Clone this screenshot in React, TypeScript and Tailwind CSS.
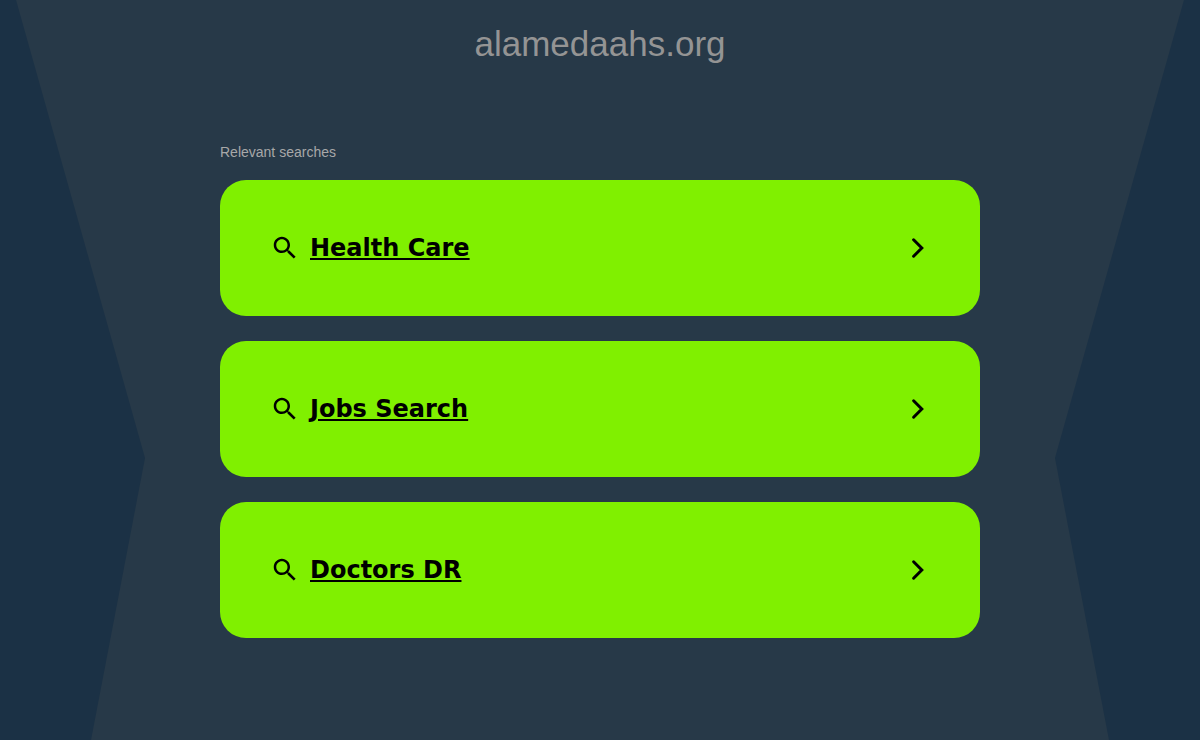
const searches = ['Health Care', 'Jobs Search', 'Doctors DR'];

function SearchIcon() {
  return (
    <svg viewBox="0 0 24 24" className="size-[30px] shrink-0" fill="currentColor" aria-hidden="true">
      <path d="M15.5 14h-.79l-.28-.27C15.41 12.59 16 11.11 16 9.5 16 5.91 13.09 3 9.5 3S3 5.91 3 9.5 5.91 16 9.5 16c1.61 0 3.09-.59 4.23-1.57l.27.28v.79l5 4.99L20.49 19l-4.99-5zm-6 0C7.01 14 5 11.99 5 9.5S7.01 5 9.5 5 14 7.01 14 9.5 11.99 14 9.5 14z" />
    </svg>
  );
}

function ChevronIcon() {
  return (
    <svg viewBox="0 0 24 24" className="size-6 shrink-0" fill="none" stroke="currentColor" strokeWidth="3" aria-hidden="true">
      <path d="M7.6 3.8 15.8 12 7.6 20.2" strokeLinecap="round" />
    </svg>
  );
}

// Dark wedges on both sides of the page
function Backdrop() {
  return (
    <div className="absolute inset-0 flex justify-between overflow-hidden" aria-hidden="true">
      <svg viewBox="0 0 145 740" preserveAspectRatio="none" className="h-full w-[145px] fill-[#1b3145]">
        <path d="M0 0H16L145 458L91 740H0z" />
      </svg>
      <svg viewBox="0 0 145 740" preserveAspectRatio="none" className="h-full w-[145px] fill-[#1b3145]">
        <path d="M145 0H129L0 458L54 740H145z" />
      </svg>
    </div>
  );
}

export default function App() {
  return (
    <div className="relative min-h-screen bg-[#273948] font-['Liberation_Sans',Arial,sans-serif]">
      <Backdrop />
      <div className="relative mx-auto max-w-[760px]">
        <h1 className="pt-5 text-center text-[35px] leading-12 text-[#949494]">alamedaahs.org</h1>
        <main className="pt-[74px]">
          <h2 className="text-sm leading-5 text-[#a8a8a8]">Relevant searches</h2>
          <ul className="mt-[18px] flex flex-col gap-[25px]">
            {searches.map((title) => (
              <li key={title}>
                <a
                  href="#"
                  className="flex items-center rounded-[26px] bg-[#80f000] px-[50px] py-[50px] font-['DejaVu_Sans',Verdana,sans-serif] text-black"
                >
                  <SearchIcon />
                  <span className="ml-[10px] flex-1 text-2xl leading-9 font-bold underline">{title}</span>
                  <ChevronIcon />
                </a>
              </li>
            ))}
          </ul>
        </main>
      </div>
    </div>
  );
}
